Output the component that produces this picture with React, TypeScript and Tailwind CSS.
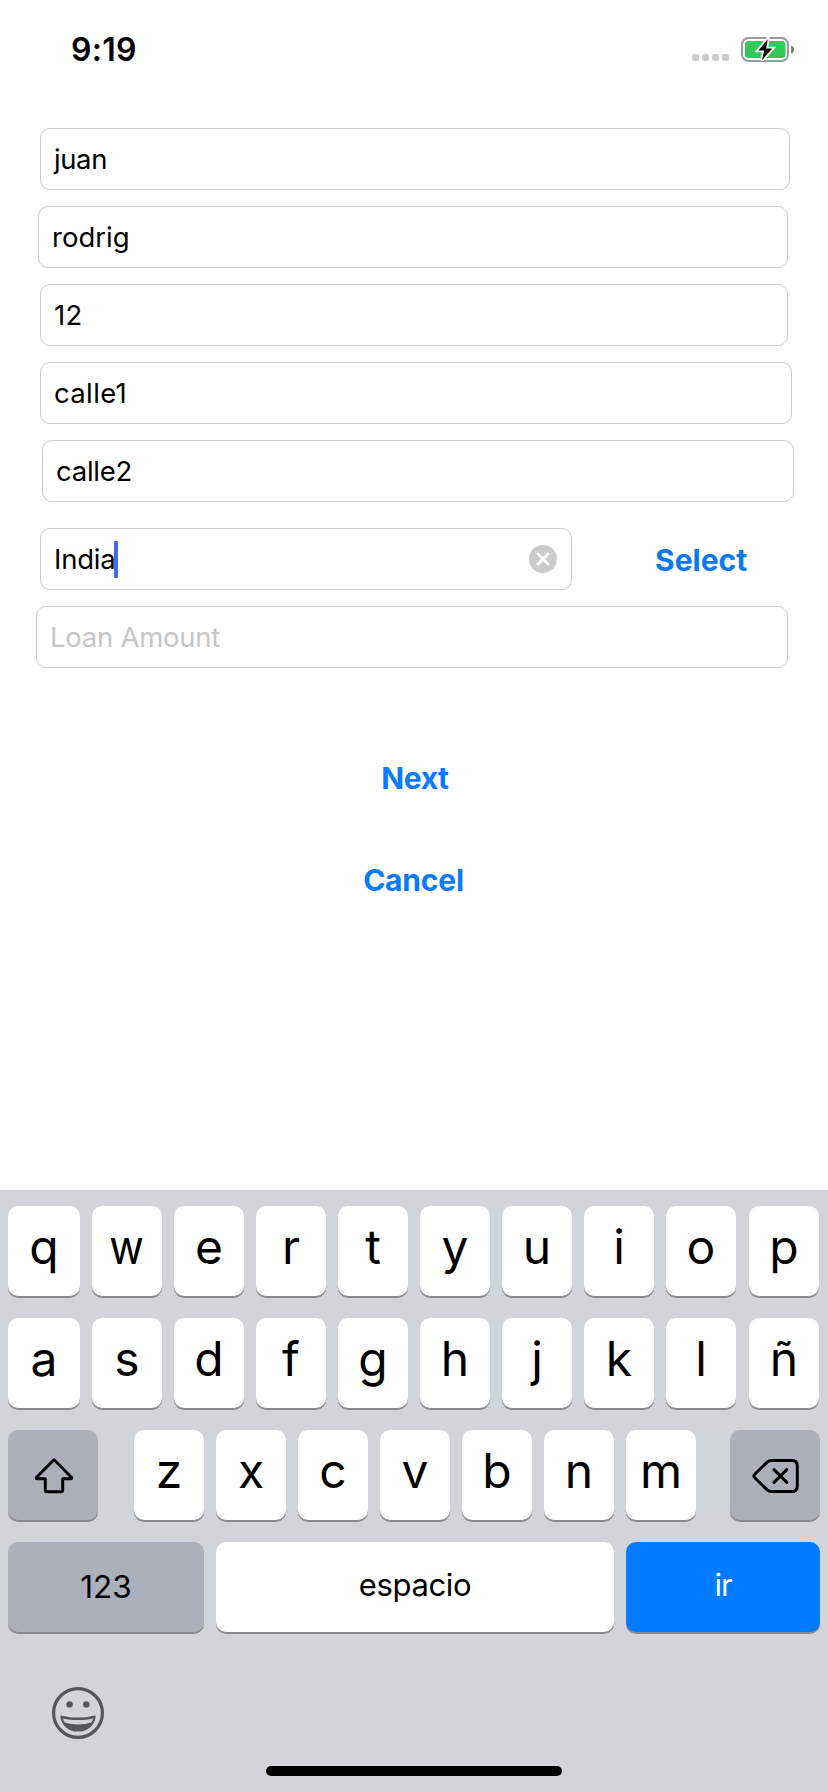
import type { ReactNode } from 'react';
import { clsx } from 'clsx';

function StatusBar() {
  return (
    <header className="flex h-[128px] items-start justify-between pt-[32px] pr-[32px] pl-[71px]">
      <span className="text-[32px] leading-[36px] font-semibold tracking-[0.3px]">9:19</span>
      <div className="flex pt-1">
        <div className="mt-[18px] mr-[11px] flex gap-[3px]">
          {[0, 1, 2, 3].map((dot) => (
            <span key={dot} className="size-[7px] rounded-[2.5px] bg-[#cbcbcb]" />
          ))}
        </div>
        <svg width="56" height="28" viewBox="0 0 56 28" fill="none">
          <rect x="2" y="2" width="46" height="23" rx="6.5" stroke="#9a9a9c" strokeWidth="2.1" />
          <rect x="5" y="5" width="40.5" height="17" rx="3.5" fill="#34c759" />
          <path d="M51.2 9.5c1.8.7 2.8 2.2 2.8 4s-1 3.4-2.8 4.1z" fill="#77777a" />
          <path
            d="M27.7 3.3L18.3 14.5h5.9L22 24.3l10.2-11.7h-6z"
            fill="#000"
            stroke="#fff"
            strokeWidth="3.6"
            paintOrder="stroke"
          />
        </svg>
      </div>
    </header>
  );
}

function Field({ className, children }: { className: string; children: ReactNode }) {
  return (
    <div
      className={clsx(
        'flex h-[62px] items-center rounded-[10px] border border-[#cbcbcb] bg-white pr-[14px] pl-[13px] text-[27.5px] leading-[34px]',
        className,
      )}
    >
      {children}
    </div>
  );
}

function ClearIcon() {
  return (
    <svg className="ml-auto" width="28" height="28" viewBox="0 0 28 28" fill="none">
      <circle cx="14" cy="14" r="14" fill="#cbcbcb" />
      <path d="M9 9l10 10M19 9L9 19" stroke="#fff" strokeWidth="3" strokeLinecap="round" />
    </svg>
  );
}

function LetterKey({ letter, className = 'w-[70px]' }: { letter: string; className?: string }) {
  return (
    <div
      className={clsx(
        'flex h-[90px] items-center justify-center rounded-[10px] bg-white pb-[8px] text-[48px] leading-[58px] font-[370] shadow-[0_2px_0_#898a8e]',
        className,
      )}
    >
      <span className={letter === 'w' ? 'scale-x-[0.88]' : undefined}>{letter}</span>
    </div>
  );
}

function LetterRow({ letters }: { letters: string[] }) {
  return (
    <div className="flex gap-3">
      {letters.map((letter, i) => (
        <LetterKey
          key={letter}
          letter={letter}
          className={i === 0 ? 'w-[72px]' : i === letters.length - 1 ? 'ml-px w-[70px]' : 'w-[70px]'}
        />
      ))}
    </div>
  );
}

function ActionKey({ className, children }: { className: string; children: ReactNode }) {
  return (
    <div
      className={clsx(
        'flex h-[90px] items-center justify-center rounded-[10px] shadow-[0_2px_0_#898a8e]',
        className,
      )}
    >
      {children}
    </div>
  );
}

function ShiftIcon() {
  return (
    <svg className="mt-[2px] ml-[2px]" width="40" height="36" viewBox="0 0 40 36" fill="none" stroke="#000" strokeWidth="3" strokeLinejoin="round">
      <path d="M20 1.8L2.600 19.200c-.6.8-.2 1.500.7 1.500h8v11.600c0 1 .5 1.500 1.500 1.500h14.400c1 0 1.500-.5 1.500-1.500V20.700h8c.9 0 1.300-.7.7-1.500z" />
    </svg>
  );
}

function DeleteIcon() {
  return (
    <svg className="mt-[2px] ml-px" width="48" height="36" viewBox="0 0 48 36" fill="none" stroke="#000" strokeWidth="3" strokeLinejoin="round" strokeLinecap="round">
      <path d="M19.500 2.400h20.500c3.500 0 5.300 1.800 5.300 5.300v20.600c0 3.500-1.800 5.300-5.300 5.300H19.500c-1.800 0-3-.5-4.300-1.700L2.700 19.700c-1.100-1.100-1.100-2.300 0-3.400L15.200 4.100c1.300-1.200 2.500-1.700 4.300-1.700z" />
      <path d="M22 11.600l12.800 12.800M34.800 11.600L22 24.400" />
    </svg>
  );
}

function EmojiIcon() {
  return (
    <svg width="52" height="52" viewBox="0 0 52 52" fill="none">
      <circle cx="26" cy="26" r="24.400" stroke="#53565c" strokeWidth="3.200" />
      <circle cx="17.600" cy="17.400" r="3.200" fill="#53565c" />
      <circle cx="34.300" cy="17.400" r="3.200" fill="#53565c" />
      <path
        d="M8.400 30.200c-.2-1.200.6-1.900 1.900-1.500 4.700 1.300 10 1.900 15.700 1.900s11-.6 15.700-1.900c1.300-.4 2.100.3 1.900 1.500C42.200 39 35 44.600 26 44.600S9.800 39 8.400 30.200z"
        fill="#53565c"
      />
      <path
        d="M11 31.400c4.500 1.100 9.500 1.600 15 1.600s10.500-.5 15-1.600c-.3 1.500-.9 2.900-1.700 4.100C35.300 36.800 30.900 37.500 26 37.500s-9.300-.7-13.300-2c-.8-1.200-1.400-2.600-1.700-4.100z"
        fill="#d1d4d9"
      />
    </svg>
  );
}

function Keyboard() {
  return (
    <section className="flex h-[602px] flex-col bg-[#d1d4d9] px-2 pt-4">
      <div className="flex flex-col gap-[22px]">
        <LetterRow letters={['q', 'w', 'e', 'r', 't', 'y', 'u', 'i', 'o', 'p']} />
        <LetterRow letters={['a', 's', 'd', 'f', 'g', 'h', 'j', 'k', 'l', 'ñ']} />
        <div className="flex">
          <ActionKey className="w-[90px] bg-[#abb0ba]">
            <ShiftIcon />
          </ActionKey>
          <div className="ml-9 flex gap-3">
            {['z', 'x', 'c', 'v', 'b', 'n', 'm'].map((letter) => (
              <LetterKey key={letter} letter={letter} />
            ))}
          </div>
          <ActionKey className="ml-[34px] w-[90px] bg-[#abb0ba]">
            <DeleteIcon />
          </ActionKey>
        </div>
        <div className="flex gap-3 leading-[40px]">
          <ActionKey className="w-[196px] bg-[#abb0ba] text-[31.5px]">123</ActionKey>
          <ActionKey className="w-[398px] bg-white pb-1 text-[31px] tracking-[-0.35px]">espacio</ActionKey>
          <ActionKey className="w-[194px] bg-[#007aff] pb-1 text-[31px] tracking-[-1px] text-white">ir</ActionKey>
        </div>
      </div>
      <div className="mt-[55px] ml-[44px]">
        <EmojiIcon />
      </div>
      <div className="mt-[27px] h-[10px] w-[296px] self-center rounded-full bg-black" />
    </section>
  );
}

export default function App() {
  return (
    <div className="flex h-[1792px] w-[828px] flex-col overflow-hidden bg-white font-[Inter,sans-serif] text-black">
      <StatusBar />
      <main className="flex flex-1 flex-col">
        <div className="flex flex-col gap-4">
          <Field className="ml-[40px] w-[750px] tracking-[-0.4px]">juan</Field>
          <Field className="ml-[38px] w-[750px]">rodrig</Field>
          <Field className="ml-[40px] w-[748px] tracking-[0.4px]">12</Field>
          <Field className="ml-[40px] w-[752px] tracking-[0.35px]">calle1</Field>
          <Field className="ml-[42px] w-[752px] tracking-[-0.25px]">calle2</Field>
          <div className="mt-[10px] flex">
            <Field className="ml-[40px] w-[532px]">
              <span className="tracking-[-0.2px]">India</span>
              <span className="-ml-[2px] h-[37px] w-1 rounded-[1px] bg-[#4169e8]" />
              <ClearIcon />
            </Field>
            <button className="ml-[83px] pt-[2px] text-[30px] leading-[36px] font-[650] text-[#0a7aef]">Select</button>
          </div>
          <Field className="ml-[36px] w-[752px] tracking-[-0.25px] text-[#c6c6c8]">Loan Amount</Field>
        </div>
        <div className="mt-[92px] flex flex-col items-center gap-[66px] text-[30px] leading-[36px] font-[650] text-[#0a7aff]">
          <button className="ml-[2px] tracking-[-0.4px]">Next</button>
          <button className="mr-px tracking-[-0.2px]">Cancel</button>
        </div>
      </main>
      <Keyboard />
    </div>
  );
}
